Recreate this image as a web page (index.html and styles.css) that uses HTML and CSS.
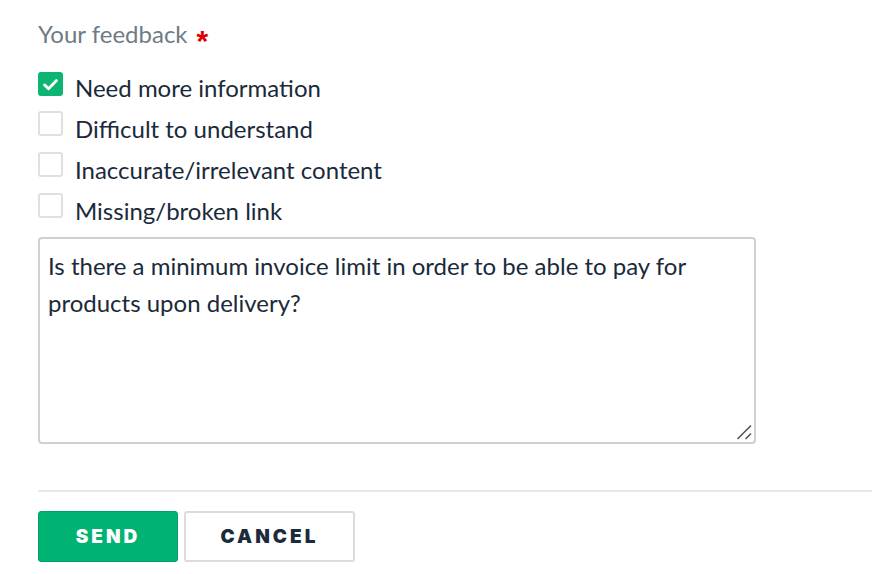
FILE: index.html
```html
<!DOCTYPE html>
<html lang="en">
<head>
<meta charset="utf-8">
<title>Feedback</title>
<link rel="stylesheet" href="styles.css">
</head>
<body>
<form class="feedback">
  <div class="label">Your feedback <span class="req">*</span></div>
  <ul class="options">
    <li class="option">
      <span class="box checked"><svg viewBox="0 0 24 24" width="19" height="19"><path d="M4.5 12.5l5 4.8L19.5 7" fill="none" stroke="#fff" stroke-width="3.6" stroke-linecap="round" stroke-linejoin="round"/></svg></span>
      <span class="opt-text">Need more information</span>
    </li>
    <li class="option">
      <span class="box"></span>
      <span class="opt-text">Difficult to understand</span>
    </li>
    <li class="option">
      <span class="box"></span>
      <span class="opt-text">Inaccurate/irrelevant content</span>
    </li>
    <li class="option">
      <span class="box"></span>
      <span class="opt-text">Missing/broken link</span>
    </li>
  </ul>
  <div class="comment-wrap">
    <textarea class="comment">Is there a minimum invoice limit in order to be able to pay for products upon delivery?</textarea>
    <svg class="grip" viewBox="0 0 16 16" width="16" height="16"><path d="M1.5 15L15 1.5M9.5 15L15 9.5" stroke="#555" stroke-width="1.6" fill="none"/></svg>
  </div>
  <hr class="divider">
  <div class="actions">
    <button type="button" class="btn btn-send">SEND</button>
    <button type="button" class="btn btn-cancel">CANCEL</button>
  </div>
</form>
</body>
</html>
```

FILE: styles.css
```css
html, body {
  margin: 0;
  padding: 0;
  background: #fff;
}
body {
  font-family: "Source Sans Pro", Lato, "Noto Sans", sans-serif;
  color: #1a2a3a;
}
.feedback {
  padding: 18px 0 0 38px;
}
.label {
  font-size: 24px;
  color: #6e7c86;
  line-height: 32px;
  display: flex;
  align-items: center;
}
.req {
  color: #e00000;
  font-family: "Liberation Sans", Arial, sans-serif;
  font-weight: 700;
  font-size: 30px;
  line-height: 32px;
  height: 32px;
  margin-left: 9px;
  padding-top: 7px;
  box-sizing: border-box;
}
.options {
  list-style: none;
  margin: 21px 0 0 0;
  padding: 0;
  display: flex;
  flex-direction: column;
  gap: 8px;
}
.option {
  display: flex;
  align-items: flex-start;
  gap: 12px;
  height: 33px;
  line-height: 33px;
  font-size: 24px;
}
.box {
  width: 25px;
  height: 25px;
  box-sizing: border-box;
  border: 2px solid #dde1e3;
  border-radius: 3px;
  display: flex;
  align-items: center;
  justify-content: center;
  margin-top: -1px;
}
.box.checked {
  background: #0db573;
  border-color: #0db573;
  height: 24px;
  margin-top: 1px;
}
.comment-wrap {
  position: relative;
  margin-top: 10px;
  width: 718px;
}
.comment {
  display: block;
  width: 718px;
  height: 207px;
  box-sizing: border-box;
  border: 2px solid #d0d0d0;
  border-radius: 4px;
  padding: 8px 8px;
  font-family: inherit;
  font-size: 24px;
  line-height: 37px;
  color: #1a2a3a;
  resize: none;
  outline: none;
}
.grip {
  position: absolute;
  right: 4px;
  bottom: 4px;
}
.divider {
  border: 0;
  border-top: 2px solid #e8e8e8;
  margin: 46px 0 0 0;
}
.actions {
  display: flex;
  gap: 6px;
  margin-top: 19px;
}
.btn {
  height: 51px;
  border-radius: 3px;
  font-family: Inter, Lato, sans-serif;
  font-weight: 900;
  font-size: 19px;
  letter-spacing: 3px;
  cursor: pointer;
  padding: 0;
}
.btn-send {
  width: 140px;
  background: #00b373;
  border: 1px solid #03a066;
  color: #fff;
}
.btn-cancel {
  width: 171px;
  background: #fff;
  border: 2px solid #dcdcdc;
  color: #1c2b3b;
}
```
